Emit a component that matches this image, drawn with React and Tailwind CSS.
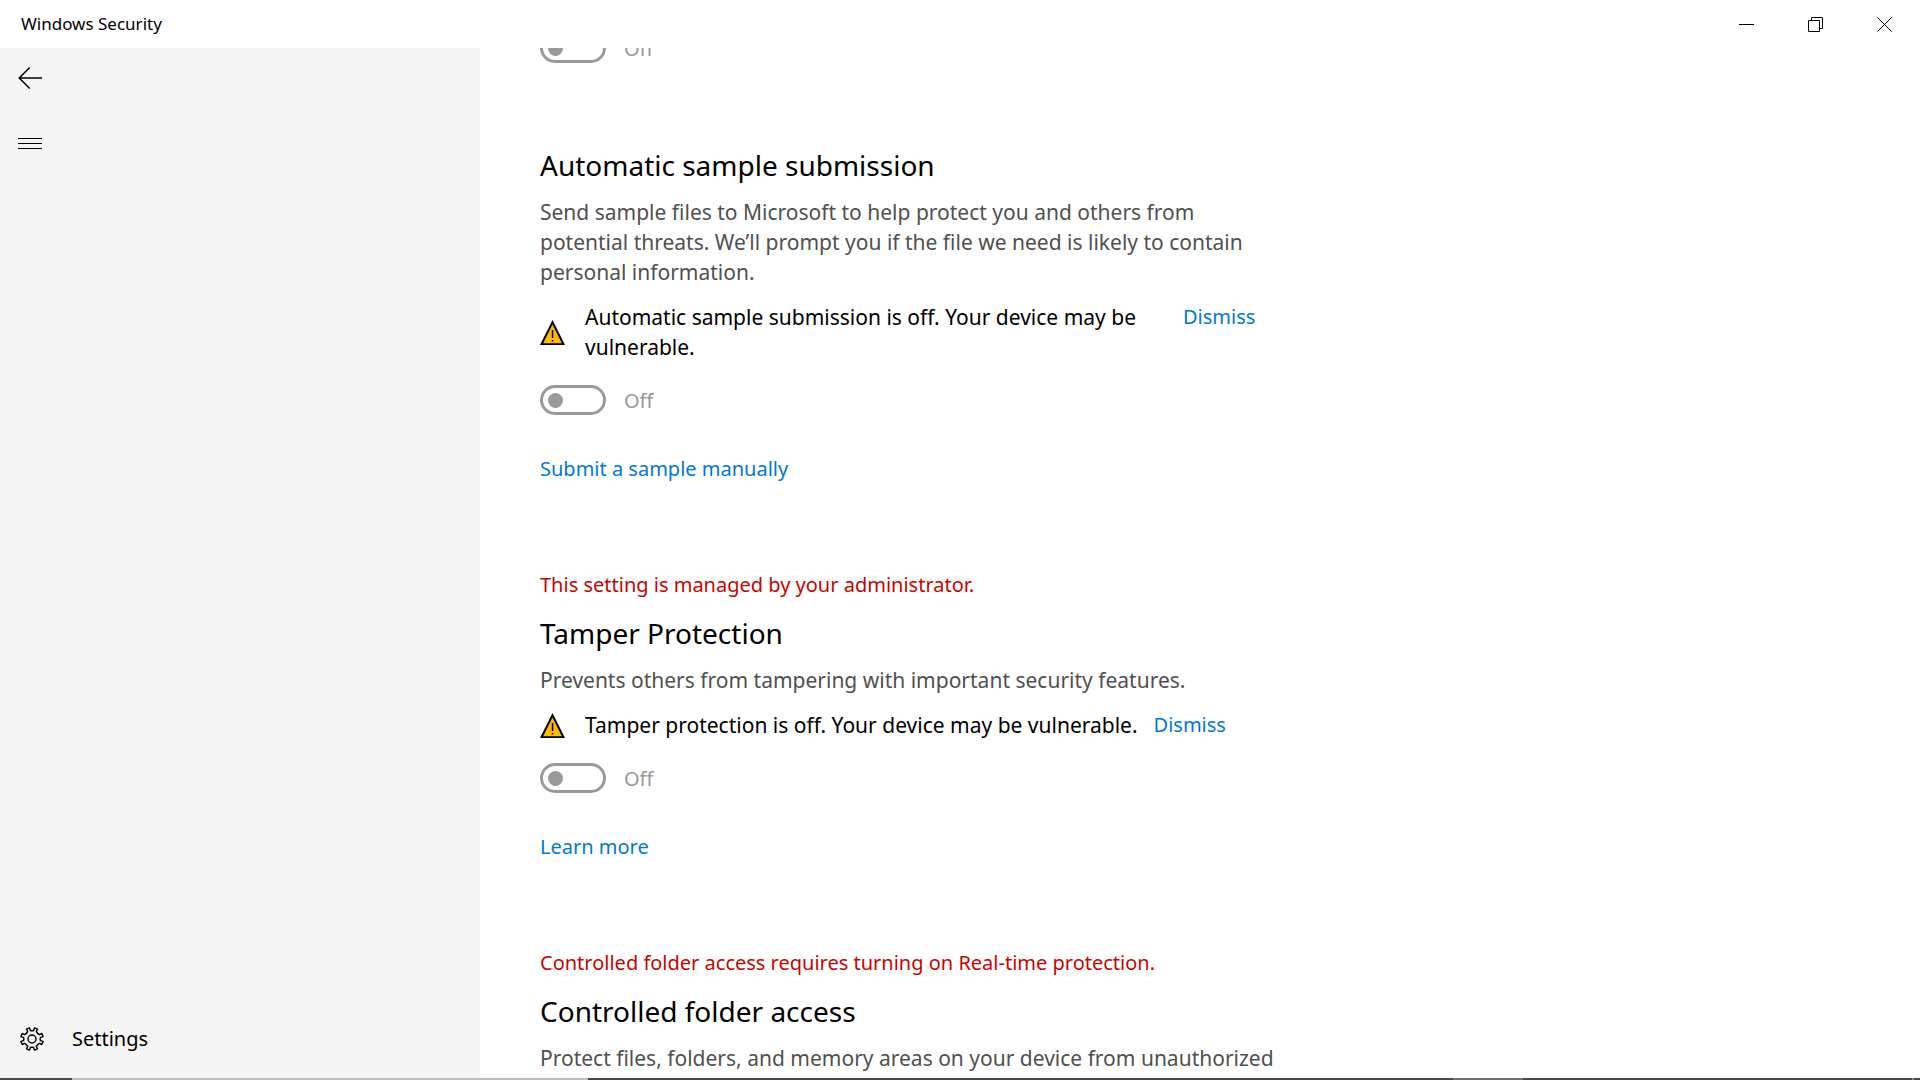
import React from "react";

function WarningIcon() {
  return (
    <svg viewBox="0 0 25 25" className="h-[25px] w-[25px] shrink-0" aria-hidden="true">
      <path d="M12.5 0 25 25H0Z" fill="#000" />
      <path d="M12.5 4.6 21.9 23.2H3.1Z" fill="#ffb900" />
      <path d="M11.8 10h1.5v8h-1.5zM11.8 20h1.5v1.6h-1.5z" fill="#000" />
    </svg>
  );
}

function Toggle({ id, label }) {
  return (
    <div className="flex h-[30px] items-center gap-[18px]">
      <button
        id={id}
        type="button"
        role="switch"
        aria-checked="false"
        aria-label={label}
        disabled
        className="flex h-[30px] w-[66px] shrink-0 items-center rounded-full border-3 border-[#999] pl-[5px]"
      >
        <span className="h-[15px] w-[15px] rounded-full bg-[#999]" />
      </button>
      <label htmlFor={id} className="pt-[2px] text-[20px] leading-[28px] text-[#999]">Off</label>
    </div>
  );
}

function Heading({ children }) {
  return <h2 className="text-[28px] leading-[40px]">{children}</h2>;
}

function Description({ children }) {
  return <p className="mt-3 text-[21px] leading-[30px] text-[#505050]">{children}</p>;
}

function Notice({ children }) {
  return <p className="mb-[14px] text-[20px] leading-[28px] text-[#c50500]">{children}</p>;
}

function Warning({ gap, children }) {
  return (
    <div className={"mt-[15px] mb-[23px] flex " + gap}>
      <div className="flex items-center gap-5">
        <WarningIcon />
        <p className="max-w-[562px] text-[21px] leading-[30px]">{children}</p>
      </div>
      <button type="button" className="self-start text-[20px] leading-[30px] text-[#0078d7]">Dismiss</button>
    </div>
  );
}

function SectionLink({ children }) {
  return (
    <a href="#" className="mt-10 block w-fit text-[20px] leading-[28px] text-[#0078d7]">{children}</a>
  );
}

export default function App() {
  return (
    <div className="flex h-screen flex-col overflow-hidden bg-white font-['Noto_Sans','Open_Sans',sans-serif] text-black">
      <header className="flex h-12 shrink-0 items-center justify-between pr-px pl-[21px]">
        <h1 className="text-[17px] leading-6">Windows Security</h1>
        <div className="flex h-full">
          <button type="button" aria-label="Minimize" className="flex h-full w-[69px] items-center justify-center">
            <svg viewBox="0 0 15 15" className="h-[15px] w-[15px]" stroke="#000" fill="none"><path d="M0 7.5h15" /></svg>
          </button>
          <button type="button" aria-label="Restore" className="flex h-full w-[69px] items-center justify-center">
            <svg viewBox="0 0 15 15" className="h-[15px] w-[15px]" stroke="#000" fill="none">
              <path d="M.5 3.5h11v11H.5zM3.5 3.5v-3h11v11h-3" />
            </svg>
          </button>
          <button type="button" aria-label="Close" className="flex h-full w-[69px] items-center justify-center">
            <svg viewBox="0 0 15 15" className="h-[15px] w-[15px]" stroke="#000" fill="none"><path d="M.3.3l14.4 14.4M14.7.3L.3 14.7" /></svg>
          </button>
        </div>
      </header>

      <div className="flex min-h-0 flex-1">
        <nav className="flex w-1/4 shrink-0 flex-col justify-between bg-[#f4f4f4]">
          <div className="flex flex-col">
            <button type="button" aria-label="Back" className="flex h-[60px] w-[60px] items-center justify-center">
              <svg viewBox="0 0 24 22" className="h-[22px] w-6" stroke="#000" fill="none" strokeWidth="1.5">
                <path d="M24 11H1M11.7.5 1.2 11l10.5 10.5" />
              </svg>
            </button>
            <button type="button" aria-label="Menu" className="mt-[5px] flex h-[60px] w-[60px] items-center justify-center">
              <svg viewBox="0 0 24 12" className="h-3 w-6" stroke="#000" fill="none">
                <path d="M0 1.5h24M0 6.5h24M0 11.5h24" />
              </svg>
            </button>
          </div>
          <a href="#" className="mb-2 flex h-[60px] items-center gap-7 pb-[2px] pl-5 text-[20px] leading-[28px]">
            <svg viewBox="0 0 24 24" className="h-6 w-6" stroke="#000" fill="none" strokeWidth="1.4" strokeLinejoin="round" aria-hidden="true">
              <path d="M10.4 3.5 9.6.9 6.5 2.2 7.7 4.6Q6.600 6.600 4.6 7.700L2.2 6.5.9 9.6l2.6.8Q4.200 12 3.500 13.600L.9 14.4l1.3 3.1 2.4-1.2Q6.600 17.400 7.700 19.400L6.5 21.8l3.1 1.3.8-2.6Q12 19.800 13.600 20.500L14.4 23.100l3.1-1.3-1.200-2.400Q17.400 17.400 19.400 16.300L21.800 17.500l1.300-3.100-2.600-.8Q19.800 12 20.500 10.400L23.100 9.600 21.800 6.500 19.400 7.700Q17.400 6.600 16.300 4.600L17.500 2.200 14.400.9l-.8 2.600Q12 4.200 10.400 3.500z" />
              <circle cx="12" cy="12" r="4" />
            </svg>
            Settings
          </a>
        </nav>

        <main className="min-w-0 flex-1 overflow-hidden pl-[60px]">
          <div className="-mt-[15px] max-w-[740px]">
            <Toggle id="cloud" label="Cloud-delivered protection" />

            <section className="mt-[82px]">
              <Heading>Automatic sample submission</Heading>
              <Description>
                Send sample files to Microsoft to help protect you and others from
                <br />
                potential threats. We’ll prompt you if the file we need is likely to contain
                <br />
                personal information.
              </Description>
              <Warning gap="gap-9">Automatic sample submission is off. Your device may be vulnerable.</Warning>
              <Toggle id="sample" label="Automatic sample submission" />
              <SectionLink>Submit a sample manually</SectionLink>
            </section>

            <section className="mt-[88px]">
              <Notice>This setting is managed by your administrator.</Notice>
              <Heading>Tamper Protection</Heading>
              <Description>Prevents others from tampering with important security features.</Description>
              <Warning gap="gap-4">Tamper protection is off. Your device may be vulnerable.</Warning>
              <Toggle id="tamper" label="Tamper Protection" />
              <SectionLink>Learn more</SectionLink>
            </section>

            <section className="mt-[88px]">
              <Notice>Controlled folder access requires turning on Real-time protection.</Notice>
              <Heading>Controlled folder access</Heading>
              <Description>Protect files, folders, and memory areas on your device from unauthorized</Description>
            </section>
          </div>
        </main>
      </div>

      <footer className="flex h-[2px] shrink-0 bg-[#484848]">
        <div className="w-[72px]" />
        <div className="w-[516px] bg-[#bdbdbd]" />
        <div className="flex-1" />
        <div className="w-[70px] bg-[#6e6e6e]" />
        <div className="w-[389px]" />
        <div className="w-[2px] bg-[#8a8a8a]" />
        <div className="w-[6px]" />
      </footer>
    </div>
  );
}
